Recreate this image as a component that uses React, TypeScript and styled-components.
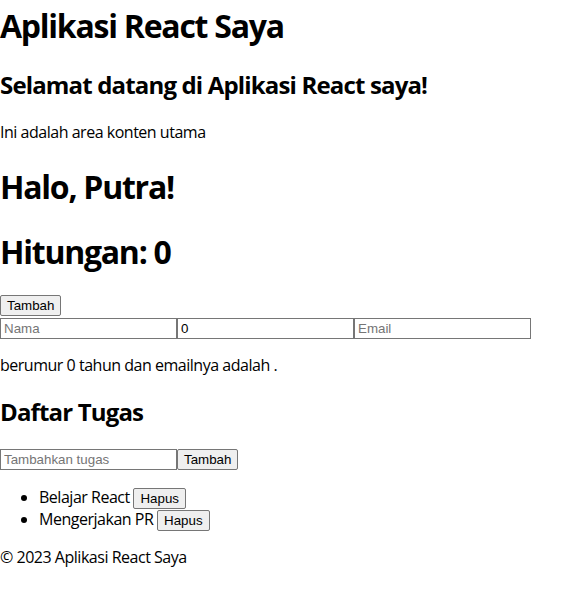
import React, { useState } from "react";
import styled, { createGlobalStyle } from "styled-components";

const GlobalStyle = createGlobalStyle`
  html, body {
    margin: 0;
    padding: 0;
    background: #ffffff;
  }
  body {
    font-family: "Open Sans", "Noto Sans", sans-serif;
    letter-spacing: -0.03em;
    color: #000000;
    line-height: 1.362;
  }
`;

const AppRoot = styled.div`
  display: block;
`;

const Header = styled.header`
  display: block;
  padding-top: 4px;
`;

const Title = styled.h1<{ $first?: boolean }>`
  font-size: 32px;
  font-weight: 700;
  letter-spacing: -0.039em;
  margin: ${(p) => (p.$first ? "0 0 21.44px" : "21.44px 0")};
`;

const SubTitle = styled.h2`
  font-size: 24px;
  font-weight: 700;
  letter-spacing: -0.035em;
  margin: 19.92px 0;
`;

const Text = styled.p`
  font-size: 16px;
  margin: 16px 0;
`;

const Row = styled.div<{ $top?: boolean }>`
  display: block;
  & > button,
  & > input {
    vertical-align: ${(p) => (p.$top ? "top" : "baseline")};
  }
`;

const NativeButton = styled.button`
  font-family: "Liberation Sans", Arial, sans-serif;
  letter-spacing: normal;
  font-size: 13.333px;
  color: #000000;
  background: #efefef;
  border: 1px solid #767676;
  border-radius: 2px;
  padding: 1px 6px;
  margin: 0;
  height: 21px;
  line-height: normal;
`;

const Field = styled.input`
  font-family: "Liberation Sans", Arial, sans-serif;
  letter-spacing: normal;
  font-size: 13.333px;
  color: #000000;
  box-sizing: border-box;
  width: 177px;
  height: 21px;
  padding: 1px 3px;
  margin: 0;
  border: 1px solid #767676;
  border-radius: 0;
  &::placeholder {
    color: #757575;
  }
`;

const TaskList = styled.ul`
  margin: 16px 0;
  padding-left: 39px;
  font-size: 16px;
`;

const TaskItem = styled.li`
  list-style: disc;
`;

const Footer = styled.footer`
  display: block;
`;

export default function App() {
  const [count] = useState(0);
  const tasks = ["Belajar React", "Mengerjakan PR"];
  return (
    <AppRoot>
      <GlobalStyle />
      <Header>
        <Title $first>Aplikasi React Saya</Title>
      </Header>
      <main>
        <SubTitle>Selamat datang di Aplikasi React saya!</SubTitle>
        <Text>Ini adalah area konten utama</Text>
        <Title>Halo, Putra!</Title>
        <Title>Hitungan: {count}</Title>
        <Row $top>
          <NativeButton>Tambah</NativeButton>
        </Row>
        <Row>
          <Field placeholder="Nama" />
          <Field type="number" defaultValue={0} />
          <Field placeholder="Email" />
        </Row>
        <Text>berumur 0 tahun dan emailnya adalah .</Text>
        <SubTitle>Daftar Tugas</SubTitle>
        <Row $top>
          <Field placeholder="Tambahkan tugas" />
          <NativeButton>Tambah</NativeButton>
        </Row>
        <TaskList>
          {tasks.map((t) => (
            <TaskItem key={t}>
              {t} <NativeButton>Hapus</NativeButton>
            </TaskItem>
          ))}
        </TaskList>
      </main>
      <Footer>
        <Text>© 2023 Aplikasi React Saya</Text>
      </Footer>
    </AppRoot>
  );
}
